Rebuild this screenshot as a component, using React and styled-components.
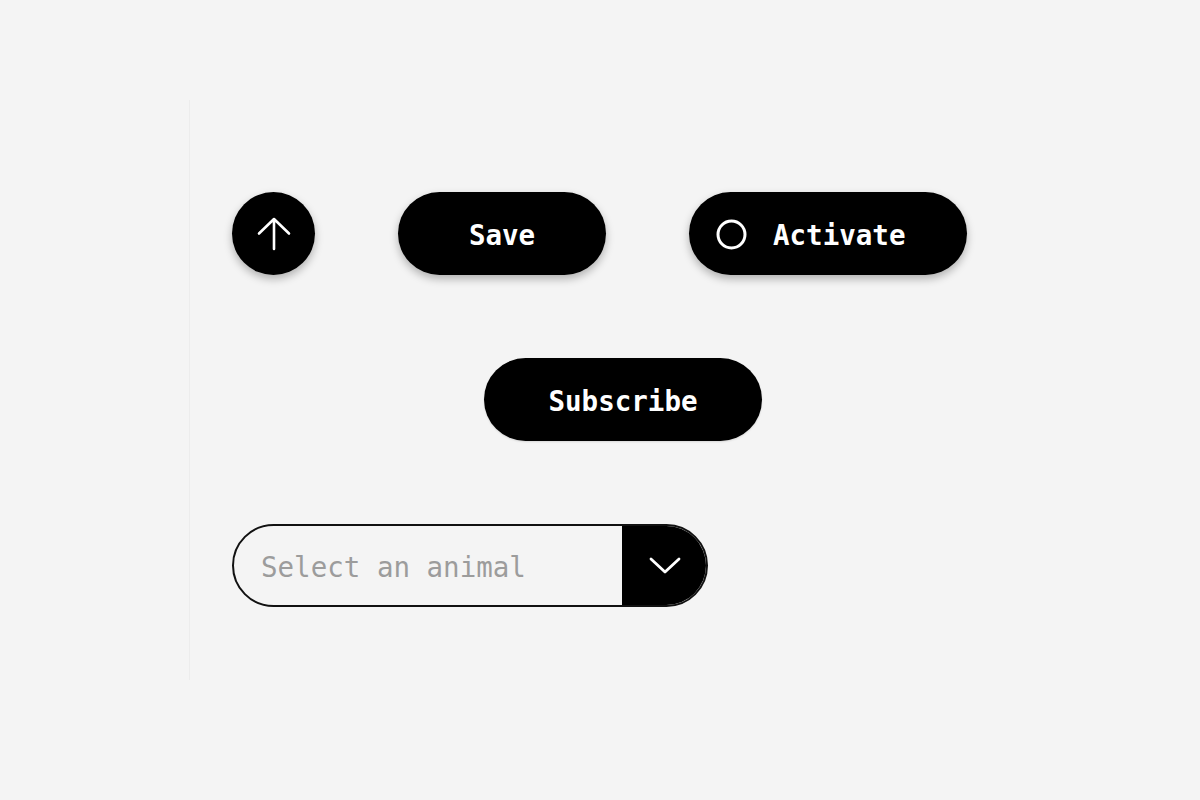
import React from "react";
import styled, { createGlobalStyle } from "styled-components";

const GlobalStyle = createGlobalStyle`
  html, body {
    margin: 0;
    padding: 0;
    background: #f4f4f4;
  }
  body {
    font-family: "DejaVu Sans Mono", "Liberation Mono", monospace;
  }
`;

const Page = styled.div`
  width: 1200px;
  height: 800px;
  background: #f4f4f4;
  padding: 100px 0 0 189px;
  box-sizing: border-box;
`;

const Board = styled.div`
  height: 580px;
  border-left: 1px solid #ececec;
  padding: 92px 0 0 42px;
  box-sizing: border-box;
  display: flex;
  flex-direction: column;
  gap: 83px;
`;

const Row = styled.div`
  display: flex;
  align-items: center;
  gap: 83px;
  margin-left: ${({ $offset }) => $offset || 0}px;
`;

const PillButton = styled.button`
  height: 83px;
  width: ${({ $width }) => $width}px;
  border: none;
  border-radius: 42px;
  background: #000;
  color: #fff;
  font-family: "DejaVu Sans Mono", "Liberation Mono", monospace;
  font-weight: bold;
  font-size: 27.5px;
  display: flex;
  align-items: center;
  justify-content: ${({ $start }) => ($start ? "flex-start" : "center")};
  gap: 26px;
  padding: ${({ $start }) => ($start ? "2px 0 0 27px" : "2px 0 0")};
  box-sizing: border-box;
  box-shadow: ${({ $flat }) =>
    $flat ? "0 1px 2px rgba(0,0,0,0.12)" : "0 4px 9px rgba(0,0,0,0.28)"};
  cursor: pointer;
`;

const IconButton = styled(PillButton)`
  width: 83px;
  padding: 0;
`;

const Select = styled.div`
  width: 476px;
  height: 83px;
  border: 2px solid #111;
  border-radius: 42px;
  box-sizing: border-box;
  display: flex;
  overflow: hidden;
`;

const Placeholder = styled.div`
  flex: 1;
  display: flex;
  align-items: center;
  padding: 2px 0 0 27px;
  color: #9c9c9c;
  font-size: 27.5px;
  font-family: "DejaVu Sans Mono", "Liberation Mono", monospace;
`;

const Toggle = styled.div`
  width: 84px;
  background: #000;
  display: flex;
  align-items: center;
  justify-content: center;
  padding-left: 2px;
  box-sizing: border-box;
`;

export default function App() {
  return (
    <>
      <GlobalStyle />
      <Page>
        <Board>
          <Row>
            <IconButton aria-label="Up">
              <svg width="34" height="34" viewBox="0 0 34 34" fill="none">
                <path
                  d="M17 32V2M2 16.5L17 2l15 14.5"
                  stroke="#fff"
                  strokeWidth="2.6"
                  strokeLinecap="round"
                  strokeLinejoin="round"
                />
              </svg>
            </IconButton>
            <PillButton $width={208}>Save</PillButton>
            <PillButton $width={278} $start>
              <svg width="31" height="31" viewBox="0 0 31 31" fill="none">
                <circle cx="15.5" cy="15.5" r="13.5" stroke="#fff" strokeWidth="3" />
              </svg>
              Activate
            </PillButton>
          </Row>
          <Row $offset={252}>
            <PillButton $width={278} $flat>
              Subscribe
            </PillButton>
          </Row>
          <Row>
            <Select>
              <Placeholder>Select an animal</Placeholder>
              <Toggle>
                <svg width="32" height="17" viewBox="0 0 32 17" fill="none">
                  <path
                    d="M2 2l14 13L30 2"
                    stroke="#fff"
                    strokeWidth="2.8"
                    strokeLinecap="round"
                    strokeLinejoin="round"
                  />
                </svg>
              </Toggle>
            </Select>
          </Row>
        </Board>
      </Page>
    </>
  );
}
